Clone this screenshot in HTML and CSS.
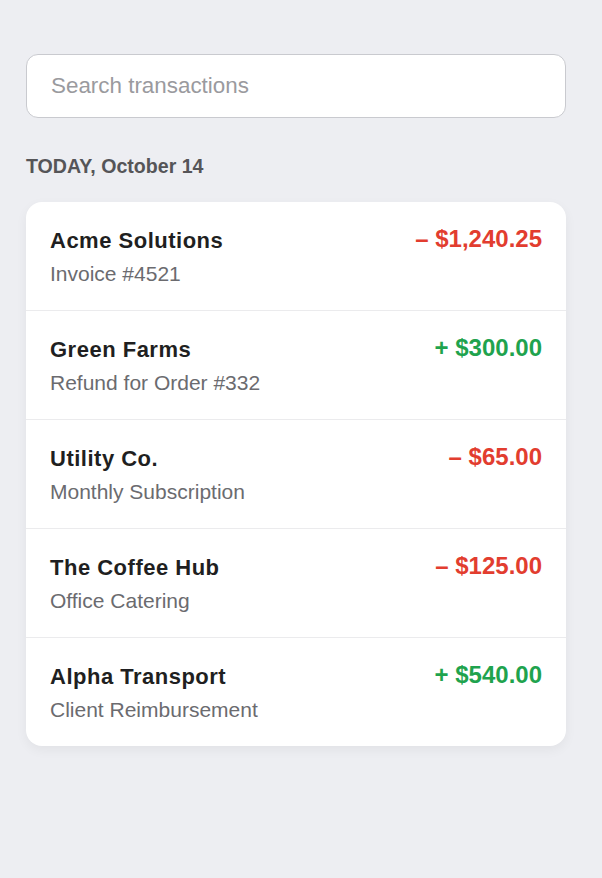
FILE: index.html
```html
<!DOCTYPE html>
<html lang="en">
<head>
<meta charset="utf-8">
<link rel="stylesheet" href="styles.css">
</head>
<body>
<main class="page">
  <input class="search" type="text" placeholder="Search transactions">
  <h2 class="day">TODAY, October 14</h2>
  <ul class="card">
    <li class="row">
      <div class="info"><div class="name">Acme Solutions</div><div class="desc">Invoice #4521</div></div>
      <div class="amount neg">&ndash; $1,240.25</div>
    </li>
    <li class="row">
      <div class="info"><div class="name">Green Farms</div><div class="desc">Refund for Order #332</div></div>
      <div class="amount pos">+ $300.00</div>
    </li>
    <li class="row">
      <div class="info"><div class="name">Utility Co.</div><div class="desc">Monthly Subscription</div></div>
      <div class="amount neg">&ndash; $65.00</div>
    </li>
    <li class="row">
      <div class="info"><div class="name">The Coffee Hub</div><div class="desc">Office Catering</div></div>
      <div class="amount neg">&ndash; $125.00</div>
    </li>
    <li class="row">
      <div class="info"><div class="name">Alpha Transport</div><div class="desc">Client Reimbursement</div></div>
      <div class="amount pos">+ $540.00</div>
    </li>
  </ul>
</main>
</body>
</html>
```
FILE: styles.css
```css
* { box-sizing: border-box; }
html, body { margin: 0; padding: 0; }
body {
  background: #edeef2;
  font-family: "Liberation Sans", Arial, sans-serif;
  color: #1c1c1e;
}
.page {
  padding: 54px 36px 40px 26px;
  display: flex;
  flex-direction: column;
}
.search {
  width: 540px;
  height: 64px;
  border: 1px solid #c9cacf;
  border-radius: 12px;
  background: #fff;
  padding: 0 24px;
  font-family: inherit;
  font-size: 22.4px;
  color: #1c1c1e;
  outline: none;
}
.search::placeholder { color: #9a9a9e; }
.day {
  margin: 37px 0 24px;
  font-size: 19.6px;
  line-height: 23px;
  font-weight: 700;
  color: #555558;
}
.card {
  list-style: none;
  margin: 0;
  padding: 0;
  width: 540px;
  background: #fff;
  border-radius: 16px;
  box-shadow: 0 4px 12px rgba(0, 0, 0, 0.05);
  overflow: hidden;
}
.row {
  display: flex;
  justify-content: space-between;
  align-items: flex-start;
  padding: 24px 24px 22px;
  border-top: 1px solid #ebebed;
}
.row:first-child { border-top: none; }
.info { display: flex; flex-direction: column; gap: 4px; }
.name {
  font-size: 22px;
  line-height: 30px;
  font-weight: 700;
  letter-spacing: 0.5px;
  color: #1f1f21;
}
.desc {
  font-size: 21px;
  line-height: 28px;
  color: #6b6b6f;
}
.amount {
  font-size: 24px;
  line-height: 26px;
  font-weight: 700;
}
.neg { color: #e23d2f; }
.pos { color: #1fa34e; }
```
